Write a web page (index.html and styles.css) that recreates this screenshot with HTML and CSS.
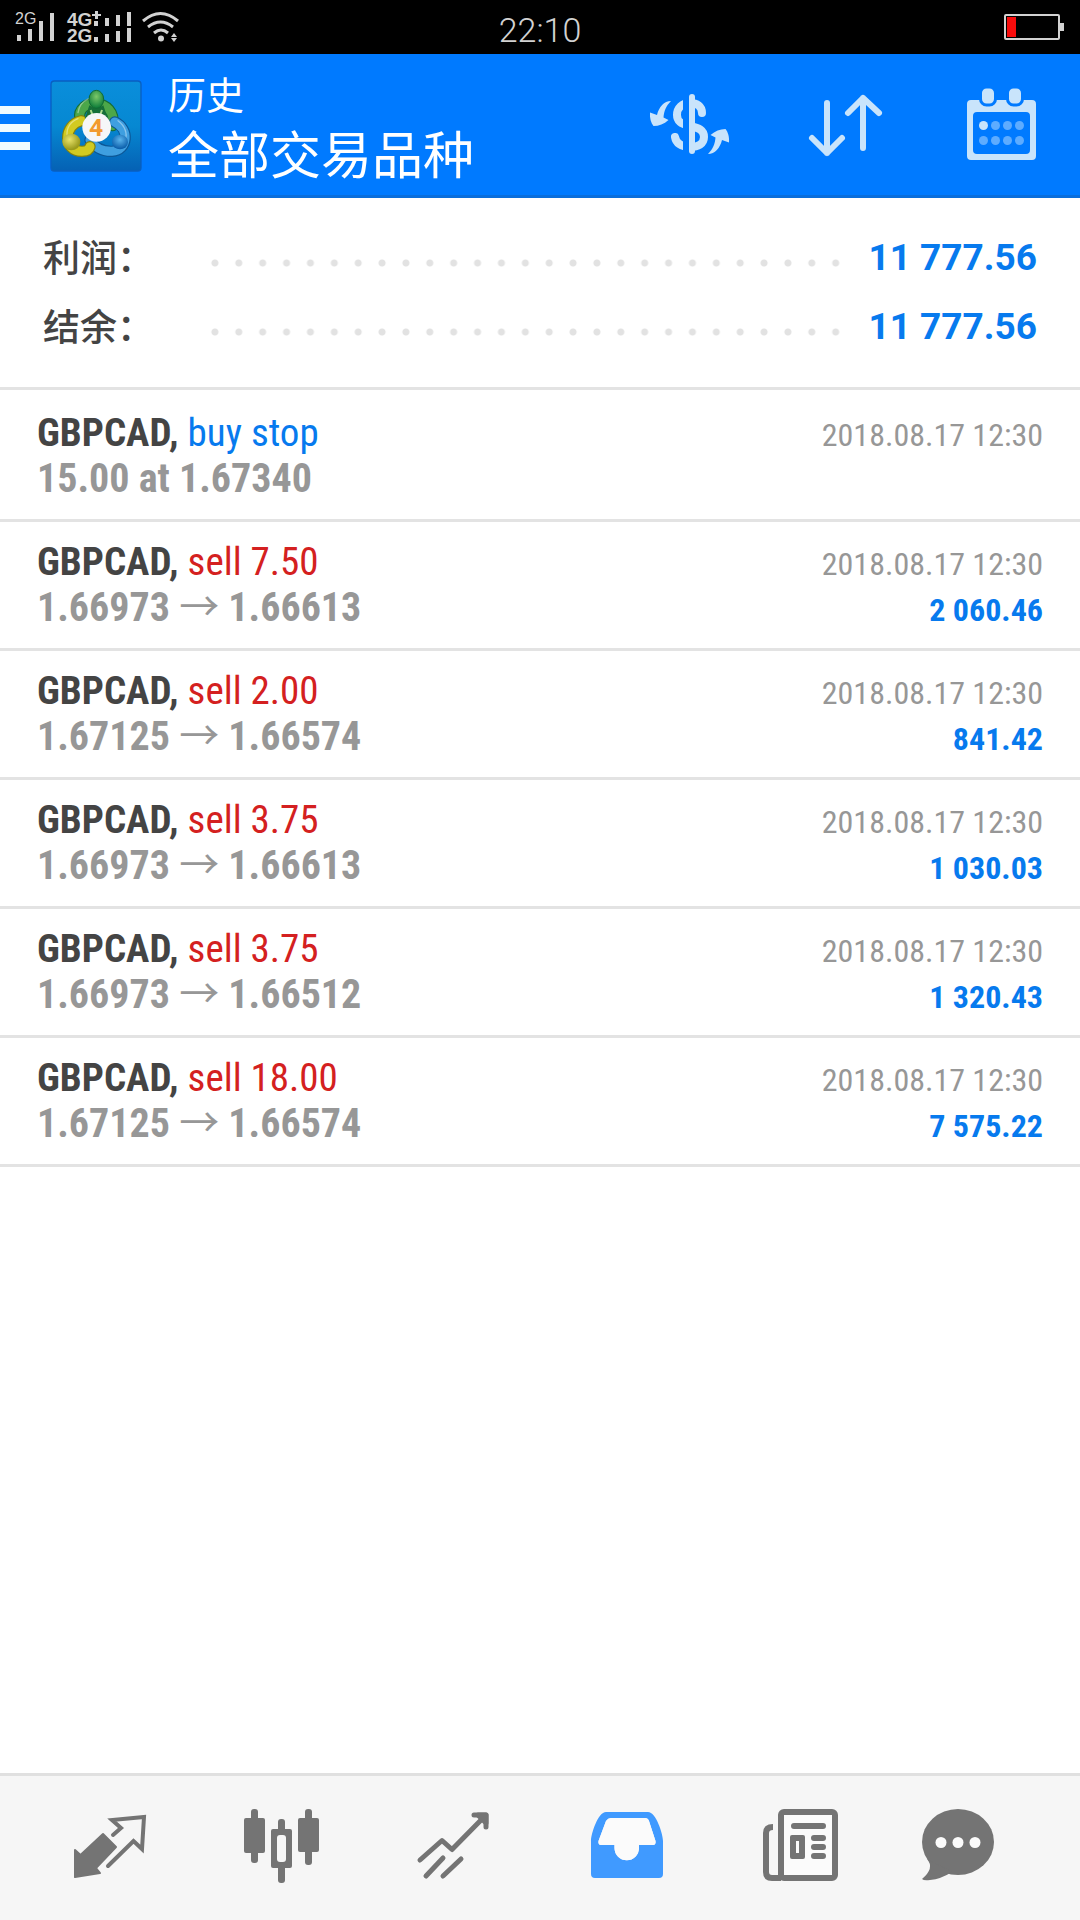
FILE: index.html
```html
<!DOCTYPE html>
<html lang="zh-CN">
<head>
<meta charset="utf-8">
<meta name="viewport" content="width=device-width, initial-scale=1">
<title>历史</title>
<link rel="stylesheet" href="styles.css">
</head>
<body>
<div class="app">
  <div class="status">
    <svg class="status-signal" viewBox="0 0 200 54" aria-hidden="true">
      <g fill="#d2d2d2">
        <text class="net-small" x="15" y="24">2G</text>
        <path d="M17 35h4v6h-4zM28 29h4v12h-4zM39 21h4v20h-4zM50 13h4v28h-4z"/>
        <text class="net" x="67" y="26">4G</text>
        <text class="net" x="67" y="42">2G</text>
        <path d="M92 14h9v2h-9zM95 11h3v8h-3zM94 21h4v5h-4zM105 18h4v8h-4zM116 15h4v11h-4zM127 12h4v14h-4zM94 37h4v5h-4zM105 34h4v8h-4zM116 31h4v11h-4zM127 28h4v14h-4z"/>
        <circle cx="161" cy="38.500" r="3"/>
        <path d="M171 37l3-4 3 4zM171 38l3 4 3-4z"/>
      </g>
      <g fill="none" stroke="#d2d2d2" stroke-width="3">
        <path d="M143 21q17.500-15 35 0M148 27q12.500-10 25 0M154 33q7-6 14 0"/>
      </g>
    </svg>
    <time class="clock">22:10</time>
    <svg class="battery" viewBox="0 0 60 26" aria-hidden="true">
      <rect x="1" y="1" width="54" height="24" rx="1" fill="none" stroke="#d2d2d2" stroke-width="2"/>
      <rect x="3" y="3" width="9" height="20" fill="#f80c0c"/>
      <rect x="56" y="9" width="4" height="8" fill="#d2d2d2"/>
    </svg>
  </div>

  <header class="bar">
    <button class="menu" type="button" aria-label="菜单"><span></span><span></span><span></span></button>
    <svg class="logo" viewBox="28 28 276 276" aria-hidden="true">
      <defs>
        <linearGradient id="sky" x1="0" y1="0" x2="0" y2="1"><stop offset="0" stop-color="#0a8edb"/><stop offset=".5" stop-color="#0688d2"/><stop offset="1" stop-color="#0561b4"/></linearGradient>
        <radialGradient id="green" cx=".5" cy=".35" r=".6"><stop offset="0" stop-color="#7cc869"/><stop offset="1" stop-color="#13803c"/></radialGradient>
        <radialGradient id="yellow" cx=".4" cy=".35" r=".6"><stop offset="0" stop-color="#e9e36a"/><stop offset="1" stop-color="#9a9a1c"/></radialGradient>
        <radialGradient id="blue" cx=".5" cy=".35" r=".6"><stop offset="0" stop-color="#5bb4ec"/><stop offset="1" stop-color="#0d60ac"/></radialGradient>
      </defs>
      <rect x="31" y="31" width="270" height="270" rx="10" fill="url(#sky)" stroke="#0a5fc0" stroke-width="4"/>
      <g fill="none" stroke-linecap="round">
        <path d="M118 146C104 80 232 80 216 165" stroke="#146c36" stroke-width="34"/>
        <path d="M118 146C104 80 232 80 216 165" stroke="#4ca749" stroke-width="27"/>
        <path d="M222 154C268 174 262 240 214 242C184 243 160 228 148 208" stroke="#0c5796" stroke-width="34"/>
        <path d="M222 154C268 174 262 240 214 242C184 243 160 228 148 208" stroke="#3f9fe0" stroke-width="27"/>
        <path d="M122 150C68 162 66 242 124 242C138 242 146 236 148 228" stroke="#84820f" stroke-width="34"/>
        <path d="M122 150C68 162 66 242 124 242C138 242 146 236 148 228" stroke="#d2ca20" stroke-width="27"/>
        <path d="M112 144C82 156 74 182 82 204M232 150C254 166 260 190 254 204M112 126C116 100 130 90 144 84" stroke="#ffffff" stroke-opacity=".4" stroke-width="4"/>
      </g>
      <path d="M146 104q20 16 42 0l14 42h-70z" fill="#166f38"/>
      <path d="M150 118l8 22M184 118l-8 22" stroke="#a9dc8c" stroke-width="6"/>
      <ellipse cx="167" cy="86" rx="22" ry="27" fill="url(#green)" stroke="#116a33" stroke-width="3"/>
      <ellipse cx="92" cy="214" rx="27" ry="25" fill="url(#yellow)"/>
      <ellipse cx="238" cy="214" rx="24" ry="22" fill="url(#blue)"/>
      <circle cx="168" cy="170" r="43" fill="#f6f6f8"/>
      <text class="logo-digit" x="166" y="196" text-anchor="middle">4</text>
    </svg>
    <div class="titles">
      <h1>历史</h1>
      <p>全部交易品种</p>
    </div>
    <div class="actions">
      <button type="button" aria-label="货币">
        <svg viewBox="613 54 156 144">
          <path fill="none" stroke="#c9e4fb" stroke-width="8" stroke-linecap="round" d="M703 113C703 106 698 103 691 103C683 103 678 108 678 115C678 122 683 124.500 691 126C700 128 705 130 705 137C705 144 699 147 691 147C682 147 677 143 676 137"/>
          <path fill="#007aff" d="M684 92h7v64h-7z"/>
          <path stroke="#c9e4fb" stroke-width="6" stroke-linecap="round" d="M693 97V151"/>
          <g fill="#c9e4fb">
            <path d="M672 101C665 101 660 107 658 115L651 112.500C650.500 118 652 123 654.500 126C660 126 665 124 669.500 120L664.500 117.500C665 111 667 106 672 101Z"/>
            <path d="M709 154C716 154 721 148 723 140L730 142.500C730.500 137 729 132 726.500 129C721 129 716 131 711.500 135L716.500 137.500C716 144 714 149 709 154Z"/>
          </g>
        </svg>
      </button>
      <button type="button" aria-label="排序">
        <svg viewBox="769 54 156 144" fill="none" stroke="#c9e4fb" stroke-width="6" stroke-linecap="round" stroke-linejoin="round">
          <path d="M828 103V153M813 138L828 153L843 138M864 148V98M849 113L864 98L880 113"/>
        </svg>
      </button>
      <button type="button" aria-label="日期">
        <svg viewBox="925 54 156 144">
          <path fill="#c9e4fb" fill-rule="evenodd" d="M972 100H1033a4 4 0 0 1 4 4V156a4 4 0 0 1-4 4H972a4 4 0 0 1-4-4V104a4 4 0 0 1 4-4ZM978 112a4 4 0 0 0-4 4V150a4 4 0 0 0 4 4H1027a4 4 0 0 0 4-4V116a4 4 0 0 0-4-4Z"/>
          <g fill="#c9e4fb" stroke="#007aff" stroke-width="3"><rect x="981.500" y="87" width="15" height="18" rx="6"/><rect x="1008.500" y="87" width="15" height="18" rx="6"/></g>
          <path fill="#007aff" d="M976 84h50v3h-50z"/>
          <circle cx="984.500" cy="125.500" r="4.500" fill="#c9e4fb"/>
          <g fill="#5eacff"><circle cx="996.500" cy="125.500" r="4.500"/><circle cx="1008.500" cy="125.500" r="4.500"/><circle cx="1020.500" cy="125.500" r="4.500"/><circle cx="984.500" cy="140.500" r="4.500"/><circle cx="996.500" cy="140.500" r="4.500"/><circle cx="1008.500" cy="140.500" r="4.500"/><circle cx="1020.500" cy="140.500" r="4.500"/></g>
        </svg>
      </button>
    </div>
  </header>

  <main class="content">
    <dl class="summary">
      <div class="summary-row"><dt>利润：</dt><dd class="dots" aria-hidden="true"></dd><dd class="total">11 777.56</dd></div>
      <div class="summary-row"><dt>结余：</dt><dd class="dots" aria-hidden="true"></dd><dd class="total">11 777.56</dd></div>
    </dl>
    <ul class="deals">
      <li class="deal"><div class="line"><span><b class="symbol">GBPCAD,</b> <span class="buy">buy stop</span></span><time>2018.08.17 12:30</time></div><div class="line"><span class="price">15.00 at 1.67340</span></div></li>
      <li class="deal"><div class="line"><span><b class="symbol">GBPCAD,</b> <span class="sell">sell 7.50</span></span><time>2018.08.17 12:30</time></div><div class="line"><span class="price">1.66973 <i>→</i> 1.66613</span><span class="profit">2 060.46</span></div></li>
      <li class="deal"><div class="line"><span><b class="symbol">GBPCAD,</b> <span class="sell">sell 2.00</span></span><time>2018.08.17 12:30</time></div><div class="line"><span class="price">1.67125 <i>→</i> 1.66574</span><span class="profit">841.42</span></div></li>
      <li class="deal"><div class="line"><span><b class="symbol">GBPCAD,</b> <span class="sell">sell 3.75</span></span><time>2018.08.17 12:30</time></div><div class="line"><span class="price">1.66973 <i>→</i> 1.66613</span><span class="profit">1 030.03</span></div></li>
      <li class="deal"><div class="line"><span><b class="symbol">GBPCAD,</b> <span class="sell">sell 3.75</span></span><time>2018.08.17 12:30</time></div><div class="line"><span class="price">1.66973 <i>→</i> 1.66512</span><span class="profit">1 320.43</span></div></li>
      <li class="deal"><div class="line"><span><b class="symbol">GBPCAD,</b> <span class="sell">sell 18.00</span></span><time>2018.08.17 12:30</time></div><div class="line"><span class="price">1.67125 <i>→</i> 1.66574</span><span class="profit">7 575.22</span></div></li>
    </ul>
  </main>

  <nav class="tabs">
    <a href="#quotes" aria-label="行情">
      <svg viewBox="24 1776 172 144">
        <path fill="currentColor" stroke="currentColor" stroke-width="2" stroke-linejoin="round" d="M103 1834L116 1847L96 1868L100 1873L75 1877V1850L80.500 1855Z"/>
        <path fill="none" stroke="currentColor" stroke-width="4" stroke-linecap="round" stroke-linejoin="miter" d="M113 1835L121 1828L112 1820L144 1817L142 1849L133.500 1841L108 1866"/>
      </svg>
    </a>
    <a href="#charts" aria-label="图表">
      <svg viewBox="196 1776 172 144">
        <g fill="currentColor"><rect x="244" y="1818" width="21" height="35" rx="2"/><rect x="251" y="1809" width="7" height="54" rx="3"/><rect x="298" y="1818" width="21" height="34" rx="2"/><rect x="305" y="1809" width="7" height="56" rx="3"/><rect x="278" y="1819" width="7" height="64" rx="3"/><rect x="271" y="1829" width="21" height="39" rx="2"/></g>
        <rect x="277" y="1835" width="9" height="27" rx="3" fill="#f6f6f6"/>
      </svg>
    </a>
    <a href="#trade" aria-label="交易">
      <svg viewBox="368 1776 172 144" fill="none" stroke="currentColor" stroke-width="5" stroke-linecap="round" stroke-linejoin="round">
        <path d="M420 1860L442 1840.500L452 1849.500L485 1816M474 1815H486V1827M426 1876L443 1858M443 1876L461 1859"/>
        <path fill="currentColor" d="M478 1815h8v8z"/>
      </svg>
    </a>
    <a class="active" href="#history" aria-label="历史" aria-current="page">
      <svg viewBox="540 1776 172 144">
        <path fill="currentColor" fill-rule="evenodd" d="M606 1812H648C656 1812 663 1834 663 1841V1874a4 4 0 0 1-4 4H595a4 4 0 0 1-4-4V1841C591 1834 598 1812 606 1812ZM611 1818Q608 1818 606 1821L598.500 1841Q598 1845 601 1845H614.500V1848A12 12 0 0 0 639 1848V1845H653Q656 1845 655.500 1841L649 1821Q648 1818 645 1818Z"/>
        <path fill="#fbfbfb" d="M611 1818H645Q648 1818 649 1821L655.500 1841Q656 1845 653 1845H639V1848A12 12 0 0 1 614.500 1848V1845H601Q598 1845 598.500 1841L606 1821Q608 1818 611 1818Z"/>
      </svg>
    </a>
    <a href="#news" aria-label="新闻">
      <svg viewBox="712 1776 172 144">
        <g fill="none" stroke="currentColor" stroke-width="6">
          <rect x="781" y="1812" width="54" height="66" rx="3" fill="#fbfbfb"/>
          <path d="M773 1827Q766 1827 766 1833V1872Q766 1878 772 1878H781"/>
          <path stroke-linecap="round" d="M794 1826H823M814 1838H823M814 1847H823M814 1856H823"/>
        </g>
        <rect x="790" y="1835" width="15" height="24" rx="2" fill="currentColor"/><path fill="#fbfbfb" d="M796 1841h3v12h-3z"/>
      </svg>
    </a>
    <a href="#chat" aria-label="聊天">
      <svg viewBox="884 1776 172 144">
        <g fill="currentColor"><ellipse cx="958" cy="1842" rx="36" ry="33"/><path d="M927 1859Q935 1868 922 1879Q924 1881 930 1880Q941 1879 952 1872Z"/></g>
        <g fill="#fbfbfb"><circle cx="941" cy="1842.500" r="5.500"/><circle cx="958" cy="1842.500" r="5.500"/><circle cx="975" cy="1842.500" r="5.500"/></g>
      </svg>
    </a>
  </nav>
</div>
</body>
</html>
```
FILE: styles.css
```css
* { box-sizing: border-box; margin: 0; padding: 0; }

body {
  background: #fff;
  color: #444;
  font-family: "Roboto Condensed", Roboto, "Noto Sans CJK SC", sans-serif;
}

.app { display: flex; flex-direction: column; min-height: 100vh; }

/* Status strip */
.status {
  display: grid;
  grid-template-columns: 1fr auto 1fr;
  align-items: center;
  height: 54px;
  padding-right: 16px;
  background: #000;
  color: #d2d2d2;
}
.status-signal { width: 200px; height: 54px; }
.net-small { font: 16px "Liberation Sans", Arial, sans-serif; }
.net { font: bold 19px "Liberation Sans", Arial, sans-serif; }
.clock {
  padding: 6px 0 0 16px;
  font: 300 34px/40px Roboto, sans-serif;
}
.battery { justify-self: end; width: 60px; height: 26px; }

/* Title bar */
.bar {
  display: flex;
  align-items: center;
  height: 144px;
  background: #007aff;
  box-shadow: inset 0 -3px #0a6edb;
  color: #fff;
}
.bar button { border: 0; background: none; cursor: pointer; }
.menu { display: flex; flex-direction: column; gap: 10px; width: 30px; padding-top: 4px; }
.menu span { height: 8px; background: #f0fbff; }
.logo { width: 92px; height: 92px; margin-left: 20px; }
.logo-digit { font: bold 74px Roboto, sans-serif; fill: #f29a2e; }
.titles { flex: 1; margin-left: 26px; padding-bottom: 4px; font-family: "Noto Sans CJK SC", sans-serif; white-space: nowrap; }
.titles h1 { font-size: 38px; font-weight: 400; line-height: 56px; }
.titles p { font-size: 51px; line-height: 62px; }
.actions { display: flex; }
.actions svg { display: block; width: 156px; height: 144px; }

/* Totals */
.content { flex: 1; }
.summary { padding: 24px 43px 27px; border-bottom: 3px solid #e3e3e3; }
.summary-row { display: flex; align-items: center; height: 69px; }
.summary dt { width: 160px; padding-bottom: 2px; font: 500 37px/48px "Noto Sans CJK SC", sans-serif; }
.dots {
  flex: 1;
  height: 24px;
  margin: 12px 20px 0 0;
  background: radial-gradient(circle, #e2e2e2 3px, transparent 4px) 0 0 / 24px 24px round;
}
.total { padding-top: 2px; color: #077aee; font: 700 37px/48px Roboto, sans-serif; }

/* Deals */
.deals { padding-top: 3px; list-style: none; }
.deal { padding: 18px 37px; border-bottom: 3px solid #e3e3e3; }
.line {
  display: flex;
  align-items: baseline;
  justify-content: space-between;
  height: 45px;
  font-size: 39px;
  line-height: 45px;
}
.buy { color: #077aee; }
.sell { color: #d42020; }
.price { color: #979797; font-size: 40px; font-weight: 700; }
.price i { font: 400 40px/1px "Noto Sans CJK SC", sans-serif; }
.line time { color: #979797; font-size: 32px; line-height: 32px; }
.profit { color: #077aee; font-size: 32px; font-weight: 700; line-height: 32px; }

/* Bottom tabs */
.tabs {
  display: grid;
  grid-template-columns: repeat(6, 1fr);
  padding: 0 24px;
  border-top: 3px solid #e0e0e0;
  background: #f6f6f6;
}
.tabs a { color: #747474; }
.tabs a.active { color: #409aff; }
.tabs svg { display: block; width: 100%; height: 144px; }
```
